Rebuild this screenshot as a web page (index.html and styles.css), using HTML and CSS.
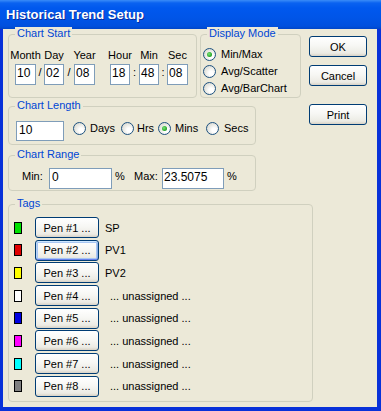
FILE: index.html
```html
<!DOCTYPE html>
<html lang="en">
<head>
  <meta charset="UTF-8">
  <title>Historical Trend Setup</title>
  <link rel="stylesheet" href="styles.css">
</head>
<body>
  <div class="window">
    <div class="titlebar">Historical Trend Setup</div>
    <div class="client">
      <div class="top">
        <div class="left">
          <div class="row1">
            <div class="group start">
              <span class="legend">Chart Start</span>
              <div class="datetime">
                <div class="dt w21"><span>Month</span><div class="box">10</div></div>
                <span class="sep s8">/</span>
                <div class="dt w20"><span>Day</span><div class="box">02</div></div>
                <span class="sep s10">/</span>
                <div class="dt w21"><span>Year</span><div class="box">08</div></div>
                <span class="sep s15"></span>
                <div class="dt w20"><span>Hour</span><div class="box">18</div></div>
                <span class="sep s9">:</span>
                <div class="dt w20"><span>Min</span><div class="box">48</div></div>
                <span class="sep s8">:</span>
                <div class="dt w21"><span>Sec</span><div class="box">08</div></div>
              </div>
            </div>
            <div class="group mode">
              <span class="legend">Display Mode</span>
              <div class="opt"><span class="radio on"></span>Min/Max</div>
              <div class="opt"><span class="radio"></span>Avg/Scatter</div>
              <div class="opt"><span class="radio"></span>Avg/BarChart</div>
            </div>
          </div>

          <div class="group length">
            <span class="legend">Chart Length</span>
            <div class="box len-box">10</div>
            <div class="units">
              <div class="opt u-days"><span class="radio"></span>Days</div>
              <div class="opt u-hrs"><span class="radio"></span>Hrs</div>
              <div class="opt u-mins"><span class="radio on"></span>Mins</div>
              <div class="opt"><span class="radio"></span>Secs</div>
            </div>
          </div>

          <div class="group range">
            <span class="legend">Chart Range</span>
            <span class="txt lbl-min">Min:</span>
            <div class="box min-box">0</div>
            <span class="txt pct">%</span>
            <span class="txt lbl-max">Max:</span>
            <div class="box max-box">23.5075</div>
            <span class="txt pct">%</span>
          </div>
        </div>

        <div class="buttons">
          <button class="btn side">OK</button>
          <button class="btn side cancel">Cancel</button>
          <button class="btn side print">Print</button>
        </div>
      </div>

      <div class="group tags">
        <span class="legend">Tags</span>
        <div class="pen-row"><span class="swatch green"></span><button class="btn pen">Pen #1 ...</button><span class="tag">SP</span></div>
        <div class="pen-row"><span class="swatch red"></span><button class="btn pen focus">Pen #2 ...</button><span class="tag">PV1</span></div>
        <div class="pen-row"><span class="swatch yellow"></span><button class="btn pen">Pen #3 ...</button><span class="tag">PV2</span></div>
        <div class="pen-row"><span class="swatch white"></span><button class="btn pen">Pen #4 ...</button><span class="tag none">... unassigned ...</span></div>
        <div class="pen-row"><span class="swatch blue"></span><button class="btn pen">Pen #5 ...</button><span class="tag none">... unassigned ...</span></div>
        <div class="pen-row"><span class="swatch magenta"></span><button class="btn pen">Pen #6 ...</button><span class="tag none">... unassigned ...</span></div>
        <div class="pen-row"><span class="swatch cyan"></span><button class="btn pen">Pen #7 ...</button><span class="tag none">... unassigned ...</span></div>
        <div class="pen-row"><span class="swatch gray"></span><button class="btn pen">Pen #8 ...</button><span class="tag none">... unassigned ...</span></div>
      </div>
    </div>
  </div>
</body>
</html>
```

FILE: styles.css
```css
body { margin: 0; background: #ECE9D8; font: 11px "Liberation Sans", Arial, sans-serif; color: #000; }
.window { width: 381px; height: 411px; display: flex; flex-direction: column; }

.titlebar {
  height: 29px; box-sizing: border-box; padding: 1px 0 0 6px; line-height: 28px;
  font-size: 13px; font-weight: bold; color: #fff; text-shadow: 1px 1px 0 #0A2C9C;
  background: linear-gradient(#3A8CF8 0, #0A62F0 3px, #0058EE 8px, #0055E8 60%, #0050DE 90%, #0046C8 100%);
}
.client {
  flex: 1; background: #ECE9D8; padding: 5px 0 0 5px;
  border-style: solid; border-color: #0831D9; border-width: 0 4px 4px 3px;
}

.top { display: flex; }
.left { width: 293px; display: flex; flex-direction: column; }
.row1 { display: flex; gap: 3px; }

.group { position: relative; box-sizing: border-box; border: 1px solid #D0D0BF; border-radius: 4px; }
.legend { position: absolute; top: -8px; left: 6px; padding: 0 2px; line-height: 13px; background: #ECE9D8; color: #0046D5; }

.box {
  box-sizing: border-box; height: 21px; border: 1px solid #7F9DB9; background: #fff;
  font-size: 12px; line-height: 16px; padding-left: 2px; white-space: nowrap; overflow: hidden;
}

/* chart start */
.start { width: 189px; height: 64px; padding: 14px 0 0 6px; }
.datetime { display: flex; }
.dt { display: flex; flex-direction: column; align-items: center; }
.dt span { line-height: 13px; margin-bottom: 2px; white-space: nowrap; }
.dt .box { width: 100%; padding-left: 1px; }
.w20 { width: 20px; }
.w21 { width: 21px; }
.sep { align-self: flex-end; box-sizing: border-box; height: 21px; padding-top: 2px; line-height: 13px; text-align: center; }
.s8 { width: 8px; }
.s9 { width: 9px; }
.s10 { width: 10px; }
.s15 { width: 15px; }

/* radios */
.mode { width: 101px; height: 64px; padding: 11px 0 0 2px; }
.opt { display: flex; align-items: center; gap: 5px; height: 17px; line-height: 13px; white-space: nowrap; }
.radio {
  position: relative; flex: none; box-sizing: border-box; width: 13px; height: 13px;
  border: 1px solid #1C5180; border-radius: 50%;
  background: radial-gradient(circle at 65% 65%, #fff 20%, #E6E6E0 60%, #CFCFC6 100%);
}
.radio.on::after {
  content: ""; position: absolute; left: 3px; top: 3px; width: 5px; height: 5px; border-radius: 50%;
  background: radial-gradient(circle at 40% 40%, #7BE37B, #21A121 70%);
}

/* chart length */
.length { width: 248px; height: 39px; margin-top: 8px; padding: 14px 0 0 7px; display: flex; align-items: flex-start; }
.len-box { width: 48px; height: 20px; }
.units { display: flex; margin: -1px 0 0 9px; gap: 0; }
.opt.u-days, .opt.u-mins { width: 48px; gap: 4px; }
.opt.u-hrs { width: 37px; gap: 3px; }

/* chart range */
.range { width: 248px; height: 36px; margin-top: 10px; padding: 12px 0 0 13px; display: flex; align-items: flex-start; }
.txt { line-height: 13px; margin-top: 2px; white-space: nowrap; }
.lbl-min { width: 27px; }
.lbl-max { width: 28px; }
.pct { width: 19px; margin-left: 3px; }
.min-box { width: 63px; }
.max-box { width: 62px; padding-left: 1px; }

/* buttons */
.btn {
  box-sizing: border-box; height: 21px; padding: 0; margin: 0;
  font: 11px "Liberation Sans", Arial, sans-serif; color: #000; text-align: center;
  border: 1px solid #003C74; border-radius: 3px;
  background: linear-gradient(#FFFFFF 0%, #F7F7F4 45%, #ECEBE4 85%, #D8D2C6 100%);
}
.buttons { margin-left: 8px; padding-top: 2px; display: flex; flex-direction: column; }
.side { width: 58px; }
.cancel { margin-top: 8px; }
.print { margin-top: 18px; }

/* tags */
.tags { width: 305px; height: 198px; margin-top: 13px; padding: 12px 0 0 5px; }
.pen-row { display: flex; align-items: center; height: 21px; margin-bottom: 1.7px; }
.swatch { box-sizing: border-box; width: 8px; height: 12px; border: 1px solid #000; margin-right: 13px; }
.pen { width: 64px; }
.pen.focus { box-shadow: inset 0 1px 0 #CEE7FF, inset 0 -1px 0 #6982EE, inset 1px 0 0 #B8D2F8, inset -1px 0 0 #89ADE4, inset 0 0 0 2px #A8C6F2; }
.tag { margin-left: 6px; white-space: nowrap; }
.tag.none { margin-left: 11px; }

.green { background: #00E000; }
.red { background: #E00000; }
.yellow { background: #FFFF00; }
.white { background: #FFFFFF; }
.blue { background: #0000E0; }
.magenta { background: #FF00FF; }
.cyan { background: #00FFFF; }
.gray { background: #808080; }
```
